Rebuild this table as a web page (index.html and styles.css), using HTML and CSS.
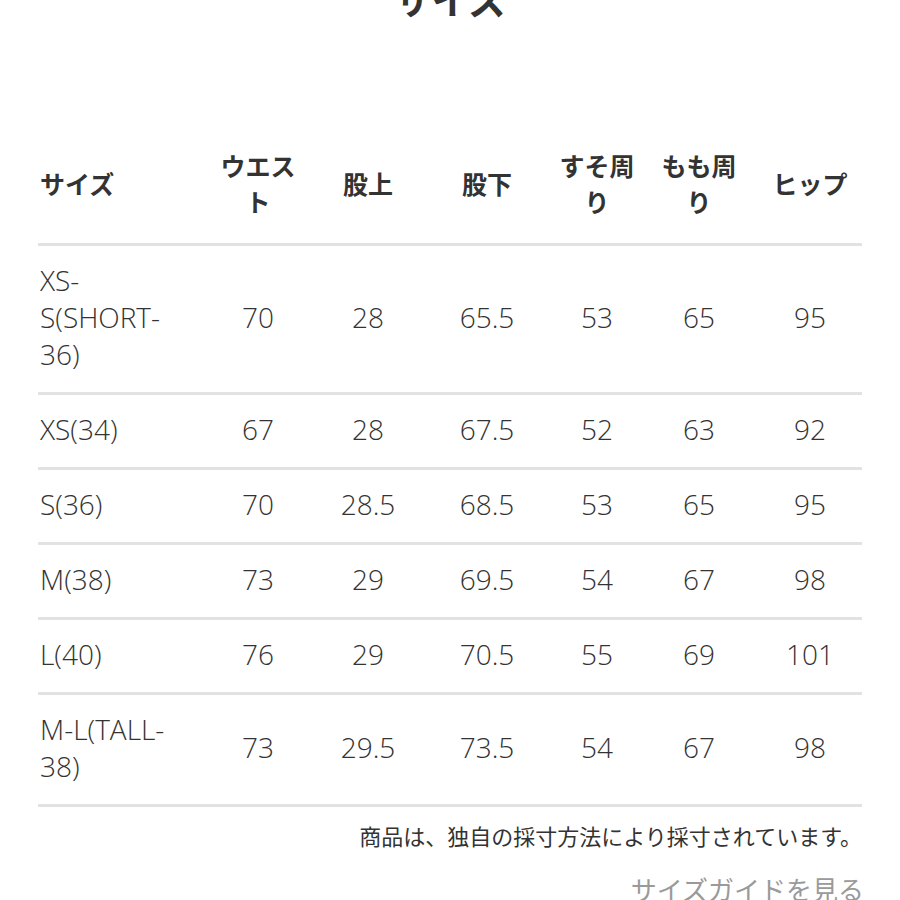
FILE: index.html
```html
<!DOCTYPE html>
<html lang="ja">
<head>
<meta charset="utf-8">
<link rel="stylesheet" href="styles.css">
</head>
<body>
<div class="page">
  <h1 class="title">サイズ</h1>
  <table class="size-table">
    <colgroup>
      <col class="c1"><col class="c2"><col class="c3"><col class="c4"><col class="c5"><col class="c6"><col class="c7">
    </colgroup>
    <thead>
      <tr>
        <th class="first">サイズ</th>
        <th class="h-waist">ウエスト</th>
        <th>股上</th>
        <th>股下</th>
        <th class="h-hem">すそ周り</th>
        <th class="h-thigh">もも周り</th>
        <th>ヒップ</th>
      </tr>
    </thead>
    <tbody>
      <tr><td class="first">XS-S(SHORT-36)</td><td>70</td><td>28</td><td>65.5</td><td>53</td><td>65</td><td>95</td></tr>
      <tr><td class="first">XS(34)</td><td>67</td><td>28</td><td>67.5</td><td>52</td><td>63</td><td>92</td></tr>
      <tr><td class="first">S(36)</td><td>70</td><td>28.5</td><td>68.5</td><td>53</td><td>65</td><td>95</td></tr>
      <tr><td class="first">M(38)</td><td>73</td><td>29</td><td>69.5</td><td>54</td><td>67</td><td>98</td></tr>
      <tr><td class="first">L(40)</td><td>76</td><td>29</td><td>70.5</td><td>55</td><td>69</td><td>101</td></tr>
      <tr><td class="first">M-L(TALL-38)</td><td>73</td><td>29.5</td><td>73.5</td><td>54</td><td>67</td><td>98</td></tr>
    </tbody>
  </table>
  <p class="note">商品は、独自の採寸方法により採寸されています。</p>
  <p class="guide">サイズガイドを見る</p>
</div>
</body>
</html>
```

FILE: styles.css
```css
html, body {
  margin: 0;
  padding: 0;
  background: #ffffff;
}
body {
  font-family: "Open Sans", "Noto Sans CJK JP", sans-serif;
  color: #333333;
  overflow: hidden;
}
.page {
  padding: 0 38px;
}
.title {
  margin: -21px 0 0;
  font-family: "Noto Sans CJK JP", sans-serif;
  font-weight: 700;
  font-size: 38px;
  line-height: 38px;
  text-align: center;
  color: #333333;
}
.size-table {
  margin-top: 110px;
  width: 824px;
  table-layout: fixed;
  border-collapse: collapse;
}
.c1 { width: 162px; }
.c2 { width: 116px; }
.c3 { width: 104px; }
.c4 { width: 134px; }
.c5 { width: 86px; }
.c6 { width: 118px; }
.c7 { width: 104px; }
.size-table th {
  font-family: "Noto Sans CJK JP", sans-serif;
  font-weight: 700;
  font-size: 25px;
  line-height: 36px;
  color: #333333;
  padding: 20px 12px 24px;
  text-align: center;
  vertical-align: middle;
  border-bottom: 3px solid #e2e2e2;
}
.size-table th.h-hem {
  padding-left: 4px;
  padding-right: 4px;
}
.size-table th.h-thigh {
  padding-left: 12px;
  padding-right: 12px;
}
.size-table td {
  font-weight: 300;
  font-size: 28px;
  line-height: 37px;
  color: #333333;
  padding: 15.5px 8px 19.5px;
  text-align: center;
  vertical-align: middle;
  border-bottom: 3px solid #e2e2e2;
}
.size-table .first {
  text-align: left;
  padding-left: 2px;
  padding-right: 20px;
}
.note {
  margin: 13px 0 0;
  font-family: "Noto Sans CJK JP", sans-serif;
  font-size: 22px;
  line-height: 30px;
  text-align: right;
  color: #333333;
}
.guide {
  margin: 24px -2px 0 0;
  font-family: "Noto Sans CJK JP", sans-serif;
  font-size: 26px;
  line-height: 30px;
  text-align: right;
  color: #9a9a9a;
}
```
